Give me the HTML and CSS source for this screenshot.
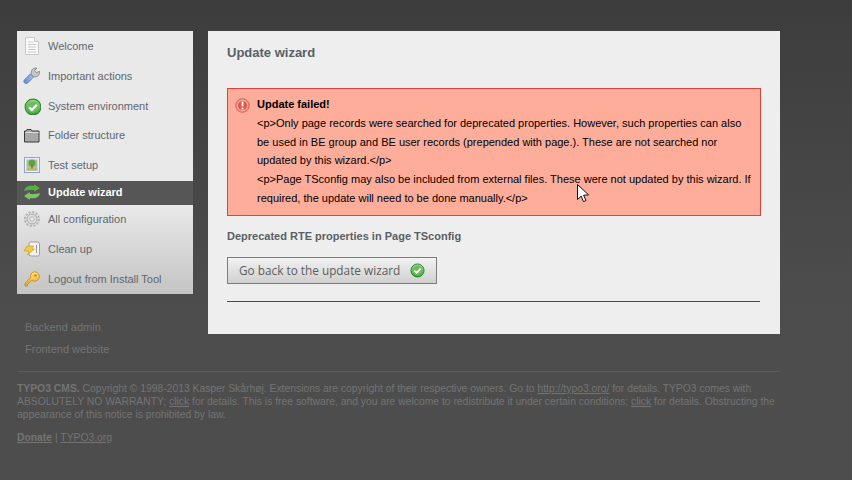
FILE: index.html
```html
<!DOCTYPE html>
<html lang="en">
<head>
<meta charset="utf-8">
<title>Update wizard</title>
<link rel="stylesheet" href="styles.css">
</head>
<body>
<svg class="defs" width="0" height="0">
<defs>
<linearGradient id="gGreen" x1="0" y1="0" x2="0" y2="1"><stop offset="0" stop-color="#9ed88e"/><stop offset="1" stop-color="#3e9e3a"/></linearGradient>
<linearGradient id="gKey" x1="0" y1="0" x2="0" y2="1"><stop offset="0" stop-color="#ffe680"/><stop offset="1" stop-color="#e8a81e"/></linearGradient>
<linearGradient id="gBlue" x1="0" y1="0" x2="1" y2="0"><stop offset="0" stop-color="#5f8ad6"/><stop offset="1" stop-color="#a9c3ee"/></linearGradient>
<symbol id="check" viewBox="0 0 16 16"><circle cx="8" cy="8" r="7" fill="url(#gGreen)" stroke="#2c8a2c"/><circle cx="8" cy="8" r="5" fill="#6bbd5c"/><path d="M4.600 8.200l2.400 2.400 4.400-4.600" fill="none" stroke="#fff" stroke-width="2"/></symbol>
</defs>
</svg>
<div class="page">
<div class="top">
<div class="side">
<ul class="menu">
<li class="item h30"><svg class="ico" viewBox="-1 0 18 18"><path d="M1.500 .5h9l4 4v13h-13z" fill="#fafafa" stroke="#c8c8c8"/><path d="M10.500 .5v4h4" fill="#eee" stroke="#c8c8c8"/><path d="M4 5h5M4 7.500h8M4 10h8M4 12.500h8M4 15h8" stroke="#c9c9c9"/></svg><a href="#">Welcome</a></li>
<li class="item h30"><svg class="ico" viewBox="0 0 17 17"><path d="M1.500 12l5.500-5.500 3 3L4.500 15c-2 2-5-1-3-3z" fill="url(#gBlue)" stroke="#5577b8" stroke-width=".8"/><path d="M8 7c-1-3 1-6.500 5-6l-2 2.500 1.500 2L15.500 4c.8 3-2 6.500-5.500 5z" fill="#c8c8c8" stroke="#808080" stroke-width=".8"/></svg><a href="#">Important actions</a></li>
<li class="item h30"><svg class="ico" viewBox="-1 -1 18 18"><use href="#check"/></svg><a href="#">System environment</a></li>
<li class="item h28"><svg class="ico" viewBox="-1 -2 18 18"><path d="M.5 14V3h1.500l1-1.500h4l1 1.500h7v11z" fill="#a8a8a8" stroke="#3a3a3a"/><path d="M1.500 4.500h13" stroke="#ddd"/></svg><a href="#">Folder structure</a></li>
<li class="item h32"><svg class="ico" viewBox="-1 -1 18 18"><rect x=".5" y=".5" width="15" height="15" fill="#eef" stroke="#8ea6d4"/><rect x="2.500" y="2.500" width="11" height="11" fill="#a9c58f"/><circle cx="8" cy="6" r="3.500" fill="#5ea04a"/><path d="M8 8v4" stroke="#8b6a3a" stroke-width="1.500"/><path d="M2.500 11.500h11v2h-11z" fill="#c9b06a"/></svg><a href="#">Test setup</a></li>
<li class="item active"><svg class="ico" viewBox="0 -1 16 16"><path d="M1 6c.5-3 3-4.500 6-4.500h3V0l5 3.500L10 7V5.300H7C5 5.300 3.500 5.500 1 6z" fill="#57ad45"/><path d="M15 8c-.5 3-3 4.500-6 4.500H6V14l-5-3.500L6 7v1.700h3c2 0 3.500-.2 6-.7z" fill="#7cc566"/></svg><a href="#">Update wizard</a></li>
<li class="item h28"><svg class="ico" viewBox="-1 -1 18 18"><circle cx="8" cy="8" r="7" fill="none" stroke="#b4b4b4" stroke-width="2" stroke-dasharray="2.200 1.460"/><circle cx="8" cy="8" r="5" fill="#dedede" stroke="#a8a8a8"/><circle cx="8" cy="8" r="2.200" fill="#efefef" stroke="#b0b0b0"/></svg><a href="#">All configuration</a></li>
<li class="item h32"><svg class="ico" viewBox="-1 -1 18 18"><rect x="5" y="1" width="10.500" height="14" rx="2" fill="#f2f2f2" stroke="#a0a0a0"/><path d="M12.500 4v8" stroke="#999"/><path d="M3 5h6.500L8 8h2.500L3.500 14 5 10H0z" fill="#f5cb45" stroke="#c69a20" stroke-width=".6"/></svg><a href="#">Clean up</a></li>
<li class="item h28"><svg class="ico" viewBox="-1 -1 18 18"><path d="M10.500.8a4.700 4.700 0 1 1-2.800 8.400L3.500 13.500 3.500 15H1v-2.500l5.500-5.700A4.700 4.700 0 0 1 10.500.8z" fill="url(#gKey)" stroke="#c48a18" stroke-width=".9"/><circle cx="11.500" cy="4.500" r="1.300" fill="#c48a18"/></svg><a href="#">Logout from Install Tool</a></li>
</ul>
<ul class="links">
<li><a href="#">Backend admin</a></li>
<li><a href="#">Frontend website</a></li>
</ul>
</div>
<div class="main">
<h1>Update wizard</h1>
<div class="error">
<svg class="err-ico" viewBox="0 0 16 16"><circle cx="8" cy="8" r="7.300" fill="#f08a7c" stroke="#d2574c" stroke-width=".8"/><circle cx="8" cy="8" r="5.400" fill="#e2574b" stroke="#fbc7bd" stroke-width=".8"/><path d="M8 3.800v5" stroke="#fff" stroke-width="2"/><path d="M8 10.200v2" stroke="#fff" stroke-width="2"/></svg>
<div class="err-body">
<strong>Update failed!</strong><br>
&lt;p&gt;Only page records were searched for deprecated properties. However, such properties can also be used in BE group and BE user records (prepended with page.). These are not searched nor updated by this wizard.&lt;/p&gt;<br>
&lt;p&gt;Page TSconfig may also be included from external files. These were not updated by this wizard. If required, the update will need to be done manually.&lt;/p&gt;
</div>
</div>
<h2>Deprecated RTE properties in Page TSconfig</h2>
<a class="btn" href="#"><span class="btn-label">Go back to the update wizard</span><svg class="btn-ico" viewBox="0 0 16 16"><use href="#check"/></svg></a>
<hr class="rule">
</div>
</div>
<div class="foot">
<p><strong>TYPO3 CMS.</strong> Copyright © 1998-2013 Kasper Skårhøj. Extensions are copyright of their respective owners. Go to <a href="#">http://typo3.org/</a> for details. TYPO3 comes with ABSOLUTELY NO WARRANTY; <a href="#">click</a> for details. This is free software, and you are welcome to redistribute it under certain conditions; <a href="#">click</a> for details. Obstructing the appearance of this notice is prohibited by law.</p>
<p class="foot-links"><a href="#"><strong>Donate</strong></a> | <a href="#">TYPO3.org</a></p>
</div>
</div>
<svg class="cursor" viewBox="0 0 12 19"><path d="M.5.500v15l3.700-3.400 2.300 5.500 2.500-1-2.400-5.400 5-.3z" fill="#fff" stroke="#111"/></svg>
</body>
</html>
```
FILE: styles.css
```css
* { box-sizing: border-box; }
html { height: 100%; }
body {
  margin: 0;
  min-height: 480px;
  overflow: hidden;
  position: relative;
  background: linear-gradient(#3d3d3d, #4d4d4d 65%, #4d4d4d);
  font: 11px/13px "Liberation Sans", Arial, sans-serif;
  color: #000;
}
.defs { position: absolute; }
.page { width: 780px; padding: 31px 0 0 17px; }
.top { display: flex; gap: 15px; align-items: flex-start; }
.side { width: 176px; flex: none; }
ul { list-style: none; margin: 0; padding: 0; }
a { color: inherit; }
.menu { background: linear-gradient(#e9e9e9 0, #e9e9e9 66%, #c4c4c4 100%); height: 263px; }
.item { display: flex; align-items: center; padding-left: 6px; }
.h30 { height: 30px; }
.h28 { height: 28px; }
.h32 { height: 32px; }
.item a { text-decoration: none; color: #5f6670; margin-left: 7px; }
.ico { width: 18px; height: 18px; flex: none; }
.active { height: 24px; padding-bottom: 2px; background: #565656; }
.active a { color: #fff; font-weight: bold; }
.links { padding: 22px 0 0 8px; }
.links li { height: 22px; line-height: 22px; }
.links a { text-decoration: none; color: #747474; }
.main { width: 572px; height: 303px; background: #eee; padding: 14px 19px 0; }
h1 { margin: 0; font-size: 13px; line-height: 15px; font-weight: bold; color: #5a5f66; }
.error {
  display: flex;
  margin-top: 28px;
  width: 534px;
  height: 128px;
  background: #ffad9b;
  border: 1px solid #e2423a;
  padding: 6px 6px 0 7px;
}
.err-ico { width: 15px; height: 15px; flex: none; margin: 3px 7px 0 0; }
.err-body { line-height: 18.800px; }
h2 { margin: 14px 0 0; font-size: 11px; line-height: 13px; font-weight: bold; color: #5a5f66; }
.btn {
  display: flex;
  align-items: center;
  justify-content: space-between;
  width: 210px;
  height: 27px;
  margin-top: 14px;
  padding: 0 11px 1px 11px;
  border: 1px solid #7d7d7d;
  background: linear-gradient(#f2f2f2, #cfcfcf);
  font: 11.800px "Open Sans", sans-serif;
  color: #5c5c5c;
  text-decoration: none;
}
.btn-label { white-space: nowrap; }
.btn-ico { width: 15px; height: 15px; flex: none; }
.rule { margin: 17px 0 0; border: 0; border-top: 1px solid #4a4a4a; width: 533px; }
.foot {
  margin-top: 11px;
  border-top: 1px solid #5e5e5e;
  padding-top: 10px;
  font-size: 10.350px;
  line-height: 13px;
  color: #747474;
}
.foot p { margin: 0; }
.foot .foot-links { margin-top: 10px; }
.cursor { position: absolute; left: 577px; top: 184px; width: 12px; height: 19px; }
```
